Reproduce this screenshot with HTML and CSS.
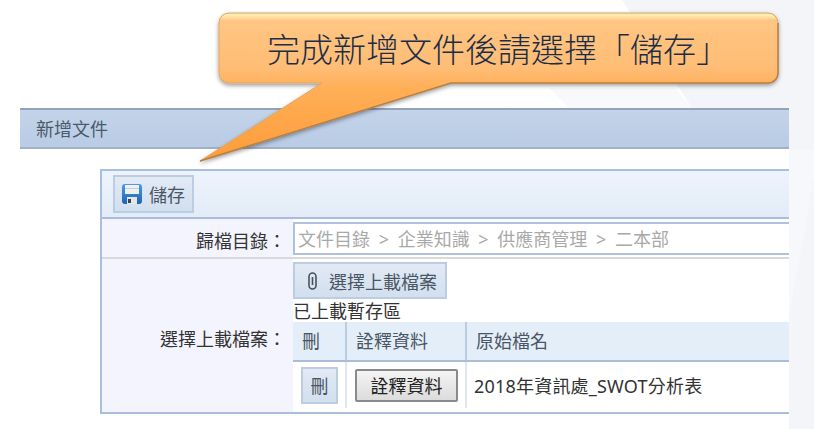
FILE: index.html
```html
<!DOCTYPE html>
<html lang="zh-Hant">
<head>
  <meta charset="UTF-8">
  <meta name="viewport" content="width=device-width, initial-scale=1.0">
  <title>新增文件</title>
  <link rel="stylesheet" href="styles.css">
</head>

<body>

  <!-- Slide background shapes -->
  <svg class="backdrop" width="814" height="429" viewBox="0 0 814 429">
    <polygon points="622,0 814,0 814,429 789,429 789,108 692,108" fill="#f3f5f8"/>
    <polygon points="549,88 675,88 692,108 569,108" fill="#f8f9fb"/>
    <polygon points="789,150 814,150 814,178 789,317" fill="#f7f8fb"/>
  </svg>

  <div class="window">
    <div class="window-title">新增文件</div>

    <div class="panel">
      <div class="toolbar">
        <button class="btn btn-save" type="button">
          <svg width="20" height="20" viewBox="0 0 20 20">
            <defs>
              <linearGradient id="diskFill" x1="0" y1="0" x2="0" y2="1">
                <stop offset="0" stop-color="#4a9be8"/>
                <stop offset="1" stop-color="#1f63b4"/>
              </linearGradient>
            </defs>
            <rect width="20" height="20" rx="3" fill="url(#diskFill)"/>
            <rect x="3" y="1" width="14" height="9" fill="#eef0f2"/>
            <rect x="3" y="4" width="14" height="1" fill="#c9ced4"/>
            <rect x="5" y="13" width="10" height="7" fill="#e4e6e8"/>
            <rect x="6" y="15" width="3" height="4" fill="#3d4650"/>
          </svg>
          <span>儲存</span>
        </button>
      </div>

      <div class="row row-folder">
        <div class="row-label">歸檔目錄：</div>
        <div class="row-field">
          <div class="path-input">文件目錄 &gt; 企業知識 &gt; 供應商管理 &gt; 二本部</div>
        </div>
      </div>

      <div class="row row-upload">
        <div class="row-label">選擇上載檔案：</div>
        <div class="row-field">
          <button class="btn btn-upload" type="button">
            <svg width="9" height="18" viewBox="0 0 9 18">
              <path d="M4.500 5v8M1 4.500a3.500 3.500 0 0 1 7 0v9a3.500 3.500 0 0 1-7 0Z" fill="none" stroke="#4a5058" stroke-width="1.600"/>
            </svg>
            <span>選擇上載檔案</span>
          </button>
          <div class="temp-title">已上載暫存區</div>
          <table class="file-table">
            <thead>
              <tr>
                <th class="col-del">刪</th>
                <th class="col-note">詮釋資料</th>
                <th>原始檔名</th>
              </tr>
            </thead>
            <tbody>
              <tr>
                <td class="col-del"><button class="btn btn-del" type="button">刪</button></td>
                <td class="col-note"><button class="btn-note" type="button">詮釋資料</button></td>
                <td class="col-name">2018年資訊處_SWOT分析表</td>
              </tr>
            </tbody>
          </table>
        </div>
      </div>
    </div>
  </div>

  <!-- Callout over the page -->
  <svg class="callout-shape" width="814" height="170" viewBox="0 0 814 170">
    <defs>
      <linearGradient id="calloutFill" gradientUnits="userSpaceOnUse" x1="0" y1="13" x2="0" y2="161">
        <stop offset="0" stop-color="#f6dcae"/>
        <stop offset="0.015" stop-color="#fff0b4"/>
        <stop offset="0.05" stop-color="#ffc683"/>
        <stop offset="0.38" stop-color="#ffbc74"/>
        <stop offset="0.5" stop-color="#ffaf58"/>
        <stop offset="1" stop-color="#fd9c38"/>
      </linearGradient>
      <filter id="calloutShadow" x="-5%" y="-5%" width="110%" height="120%">
        <feDropShadow dx="0" dy="2" stdDeviation="2" flood-color="#000" flood-opacity="0.4"/>
      </filter>
    </defs>
    <path d="M229 13H768a10 10 0 0 1 10 10V73a10 10 0 0 1-10 10H451L200 161 322 83H229a10 10 0 0 1-10-10V23a10 10 0 0 1 10-10Z" fill="url(#calloutFill)" stroke="#dda765" stroke-width="1" filter="url(#calloutShadow)"/>
    <path d="M778 23V73a10 10 0 0 1-10 10H451L200 161" fill="none" stroke="#b97f42" stroke-width="1.500"/>
  </svg>
  <div class="callout-text">完成新增文件後請選擇「儲存」</div>

</body>
</html>
```

FILE: styles.css
```css
/* General Reset */
* {
  margin: 0;
  padding: 0;
  box-sizing: border-box;
}

body {
  width: 814px;
  height: 429px;
  overflow: hidden;
  background: #fff;
  color: #333;
  font-family: "Noto Sans", "Noto Sans CJK TC", sans-serif;
  font-size: 18px;
  padding: 108px 25px 0 20px;
}

.backdrop {
  position: absolute;
  top: 0;
  left: 0;
}

/* Window */
.window {
  position: relative;
  height: 321px;
  background: #fff;
}

.window-title {
  height: 41px;
  line-height: 38px;
  padding-left: 16px;
  color: #4b5a6b;
  background: linear-gradient(#c3d3e9, #b9cce5);
  border-top: 2px solid #94a3b8;
  border-bottom: 2px solid #a3b1c4;
}

.panel {
  margin: 20px 0 0 80px;
  height: 245px;
  border: 2px solid #a9bfe0;
  border-right: none;
  background: #fff;
}

.toolbar {
  height: 48px;
  padding: 4px 11px;
  background: linear-gradient(#eef4fc, #e2ebf7);
  border-bottom: 2px solid #a9bcd9;
}

/* Buttons */
.btn {
  display: flex;
  align-items: center;
  font: inherit;
  color: #4a5663;
  background: linear-gradient(#e2eaf5, #d2dfef);
  border: 2px solid #bccde3;
}

.btn-save {
  width: 81px;
  height: 38px;
  padding-left: 7px;
  gap: 7px;
}

.btn-upload {
  width: 154px;
  height: 37px;
  padding-left: 13px;
  gap: 12px;
  margin-top: 3px;
}

.btn-del {
  width: 37px;
  height: 37px;
  justify-content: center;
}

.btn-note {
  width: 103px;
  height: 33px;
  font: inherit;
  color: #222;
  background: linear-gradient(#f4f4f4, #dcdcdc);
  border: 2px solid #8a8a8a;
  border-radius: 2px;
}

/* Form rows */
.row {
  display: flex;
}

.row-label {
  width: 191px;
  flex-shrink: 0;
  background: #f3f4fd;
  text-align: right;
  color: #333;
  padding-right: 7px;
}

.row-folder {
  height: 40px;
  border-bottom: 2px solid #d9d9d9;
}

.row-folder .row-label {
  line-height: 44px;
}

.row-folder .row-field {
  flex: 1;
  padding-top: 3px;
}

.path-input {
  height: 33px;
  line-height: 31px;
  padding-left: 3px;
  color: #a9a9a9;
  word-spacing: 4px;
  background: #fff;
  border: 2px solid #afc1dc;
  border-right: none;
}

.row-upload {
  height: 153px;
}

.row-upload .row-label {
  display: flex;
  align-items: center;
  justify-content: flex-end;
  padding-top: 4px;
}

.row-upload .row-field {
  flex: 1;
}

.temp-title {
  height: 23px;
  line-height: 24px;
  color: #333;
}

/* Uploaded files table */
.file-table {
  width: 100%;
  border-collapse: collapse;
}

.file-table th {
  height: 39px;
  text-align: left;
  font-weight: normal;
  color: #4a5663;
  padding: 0 0 2px 9px;
  background: #e4eef9;
  border-bottom: 2px solid #a9bcd9;
}

.file-table td {
  height: 47px;
  padding-left: 8px;
  color: #333;
}

.file-table td.col-name {
  padding-left: 7px;
  letter-spacing: 0.2px;
}

.col-del,
.col-note {
  border-right: 2px solid #b9cce0;
}

.col-del {
  width: 53px;
}

.col-note {
  width: 120px;
}

.file-table td.col-del,
.file-table td.col-note {
  border-right-color: #dde6f1;
}

/* Callout */
.callout-shape {
  position: absolute;
  top: 0;
  left: 0;
}

.callout-text {
  position: absolute;
  top: 25px;
  left: 219px;
  width: 558px;
  text-align: center;
  font-family: "Noto Sans CJK TC", sans-serif;
  font-size: 33px;
  font-weight: 300;
  line-height: 46px;
  color: #1a2e48;
}
```
